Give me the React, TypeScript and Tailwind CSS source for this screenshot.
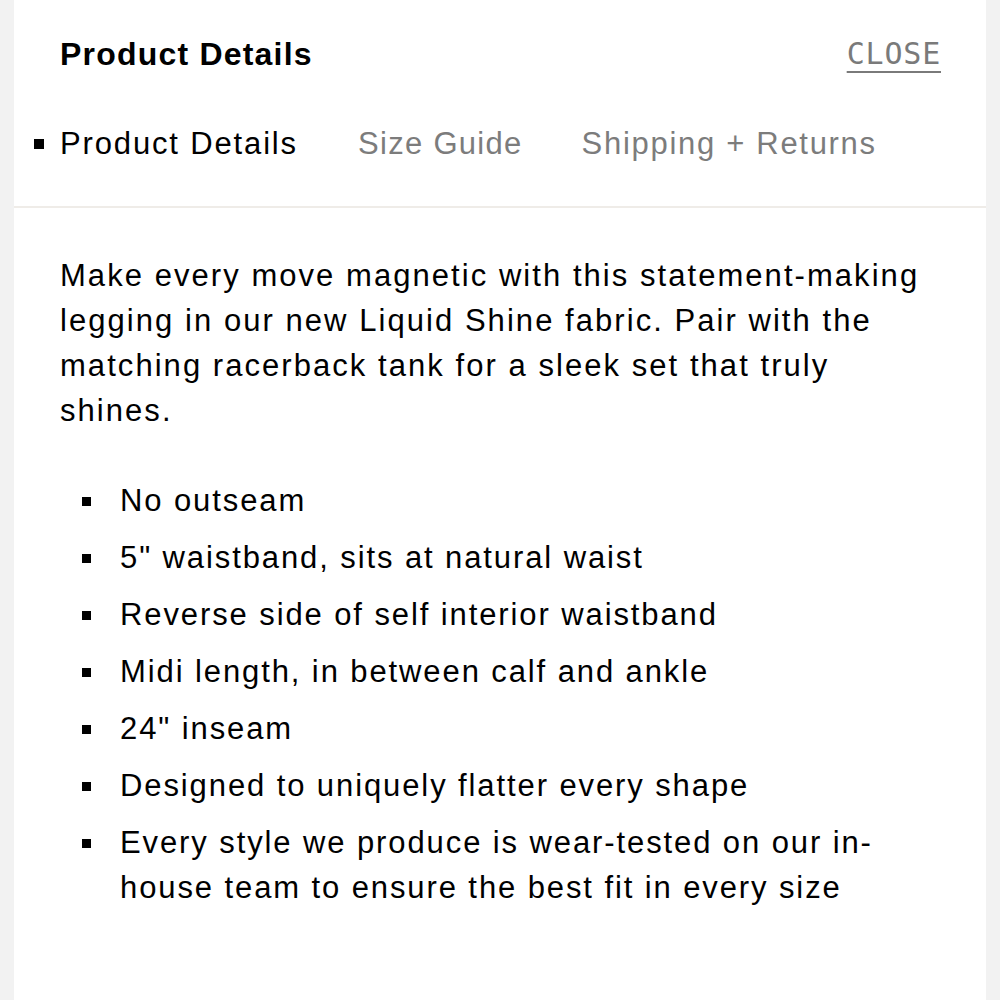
import React from "react";

const bullets: string[] = [
  "No outseam",
  '5" waistband, sits at natural waist',
  "Reverse side of self interior waistband",
  "Midi length, in between calf and ankle",
  '24" inseam',
  "Designed to uniquely flatter every shape",
  "Every style we produce is wear-tested on our in-house team to ensure the best fit in every size",
];

export default function App() {
  return (
    <div className="min-h-[1000px] w-full bg-[#f2f2f2] px-[14px] font-['Liberation_Sans',Arial,sans-serif]">
      <div className="min-h-[1000px] bg-white">
        <div className="flex items-center justify-between pl-[46px] pr-[45px] pt-[36px]">
          <h1 className="text-[32px] leading-[36px] font-bold tracking-[1.2px] text-black">Product Details</h1>
          <button className="text-[30px] leading-[36px] text-[#7a7a7a] font-['DejaVu_Sans_Mono',monospace] tracking-[0.8px] underline decoration-2 underline-offset-[7px]">
            CLOSE
          </button>
        </div>
        <div className="flex items-center pl-[20px] pt-[54px] pb-[44px] border-b-2 border-[#efece8]">
          <div className="flex items-center text-black">
            <span className="w-[10px] h-[10px] bg-black mr-[16px]"></span>
            <span className="text-[31px] leading-[36px] tracking-[1.85px]">Product Details</span>
          </div>
          <span className="ml-[60px] text-[31px] leading-[36px] tracking-[1.3px] text-[#7c7c7c]">Size Guide</span>
          <span className="ml-[59px] text-[31px] leading-[36px] tracking-[1.7px] text-[#7c7c7c]">Shipping + Returns</span>
        </div>
        <div className="pl-[46px] pr-[55px] pt-[45px] text-[31px] leading-[45px] tracking-[2.05px] text-black">
          <p>
            Make every move magnetic with this statement-making legging in our new Liquid Shine fabric. Pair with the matching racerback tank for a sleek set that truly shines.
          </p>
          <ul className="mt-[45px] flex flex-col gap-[12px] tracking-[1.9px]">
            {bullets.map((b) => (
              <li key={b} className="flex items-start">
                <span className="mt-[19px] ml-[22px] w-[9px] h-[9px] bg-black shrink-0"></span>
                <span className="ml-[29px]">{b}</span>
              </li>
            ))}
          </ul>
        </div>
      </div>
    </div>
  );
}
